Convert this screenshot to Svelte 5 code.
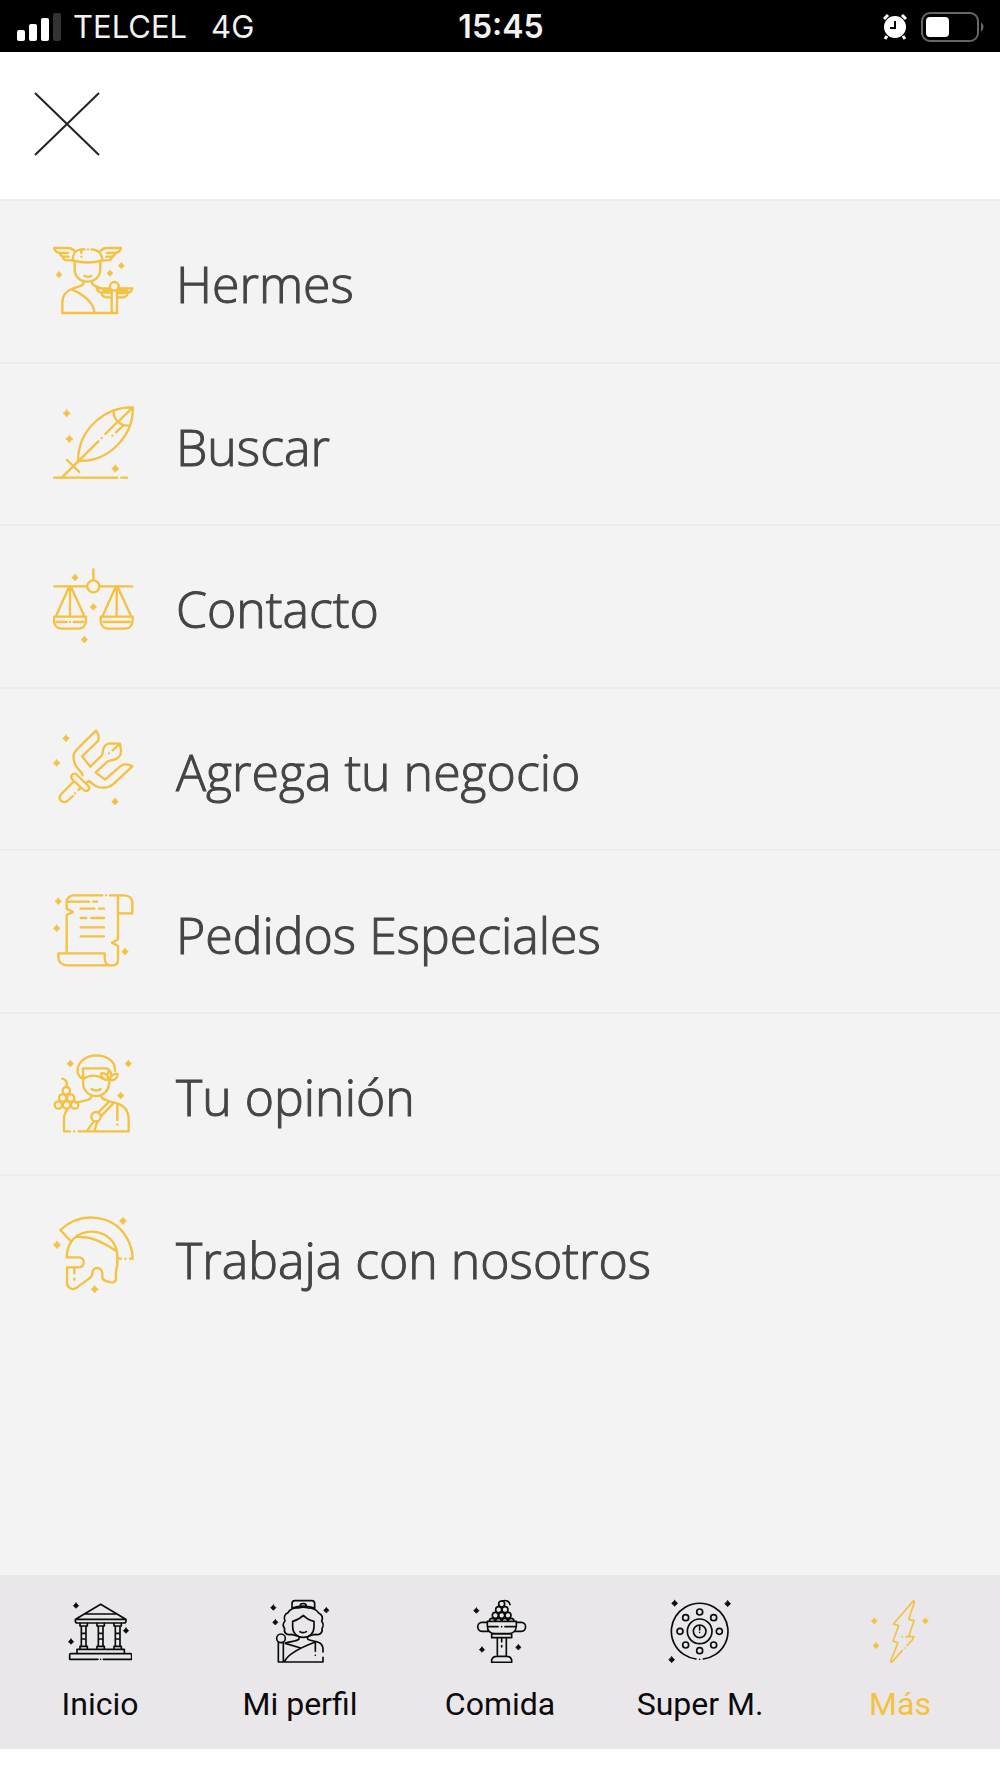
<script lang="ts">
	const menu = [
		{ label: 'Hermes', icon: hermes, box: '39 27 243 243' },
		{ label: 'Buscar', icon: quill, box: '39 20 243 243' },
		{ label: 'Contacto', icon: scales, box: '39 12 243 243' },
		{ label: 'Agrega tu negocio', icon: trident, box: '39 20 243 243' },
		{ label: 'Pedidos Especiales', icon: scroll, box: '39 28 243 243' },
		{ label: 'Tu opinión', icon: dionysus, box: '39 21 243 243' },
		{ label: 'Trabaja con nosotros', icon: helmet, box: '39 28 243 243' }
	];

	const tabs = [
		{ label: 'Inicio', icon: temple, box: '54 27 192 192' },
		{ label: 'Mi perfil', icon: goddess, box: '654 27 192 192' },
		{ label: 'Comida', icon: fruit, box: '84 27 192 192' },
		{ label: 'Super M.', icon: shield, box: '684 27 192 192' },
		{ label: 'Más', icon: bolt, box: '264 117 192 192' }
	];

	let active = $state('Más');
</script>

{#snippet star(x: number, y: number, r = 9)}
	<path
		class="star"
		d="M{x} {y - r} Q{x + 4} {y - 4} {x + r} {y} Q{x + 4} {y + 4} {x} {y + r} Q{x - 4} {y + 4} {x - r} {y} Q{x - 4} {y - 4} {x} {y - r}Z"
	/>
{/snippet}

{#snippet hermes()}
	<path d="M104 60C98 53 92 51 84 51H42C44 60 51 66 62 66H84M60 66C60 73 66 77 74 77H86M68 77C70 85 76 88 84 88H98" />
	<path d="M181 60C187 53 193 51 201 51H243C241 60 234 66 223 66H201M225 66C225 73 219 77 211 77H199M217 77C215 85 209 88 201 88H187" />
	<path d="M98 88C98 69 108 55 126 55H134M154 55C174 55 187 69 187 88M98 88C125 96 160 96 187 88M124 56V66M124 77V77M144 55V55" />
	<path d="M104 93V113C104 137 120 152 142 152S181 137 181 113V93M133 134Q143 141 154 134" />
	<path d="M131 151V157C128 167 108 167 95 174C75 182 67 195 67 215V246H232M156 151V157C160 166 172 168 184 172M95 175C130 190 160 215 164 246" />
	<circle cx="223" cy="166" r="13" />
	<path d="M215 178V246M231 178V246M170 172H209M170 172C172 180 178 185 186 185H213M184 186C186 194 191 199 200 199H214M190 178H212M236 172H277C274 182 268 186 260 186H234M263 187C260 196 255 199 248 199H233M234 179H262" />
	{@render star(57, 131)}{@render star(210, 127)}{@render star(244, 104)}
{/snippet}

{#snippet quill()}
	<path d="M278 36C200 34 116 96 114 196C205 202 282 120 278 36ZM278 36L234 80M221 50C221 72 240 92 266 91M232 80L196 116M248 92L228 111M217 121V121M185 128V128M175 138L66 246M81 194L118 230M42 247H232M244 247H261" />
	{@render star(80, 54, 11)}{@render star(88, 131, 11)}{@render star(226, 220, 11)}
{/snippet}

{#snippet scales()}
	<path d="M160 25V57M43 76H140M180 76H277M90 78V166M86 80L48 165M94 80L133 165M230 78V166M226 80L188 165M234 80L273 165M50 183H80M90 183V183M101 183H130M191 183H270" />
	<circle cx="160" cy="76" r="18" />
	<path d="M42 167H138V178C138 194 128 203 115 203H65C52 203 42 194 42 178ZM182 167H278V178C278 194 268 203 255 203H205C192 203 182 194 182 178Z" />
	{@render star(105, 50, 10)}{@render star(160, 138, 10)}{@render star(133, 236, 10)}
{/snippet}

{#snippet trident()}
	<path d="M168 31L110 88C97 101 99 120 108 138L125 157L128 165M168 31C176 42 178 54 174 62L126 108L151 139L185 106C190 99 187 91 191 83C195 73 204 69 214 69L240 70L243 92C244 106 233 116 222 118C212 121 207 120 202 124L167 156L195 178L243 136C253 130 268 133 277 138L219 192C203 205 180 204 165 196L147 182L141 186M238 72L218 90M207 99V99" />
	<path d="M96 164C101 157 107 160 111 164L145 197C153 207 140 217 131 209L97 177C93 173 93 168 96 164ZM101 184L64 221C50 238 70 252 82 242L99 227M105 219V219M115 209L121 203" />
	{@render star(78, 54, 10)}{@render star(50, 128, 10)}{@render star(225, 244, 10)}
{/snippet}

{#snippet scroll()}
	<path d="M80 217V103L99 94L80 84V64C80 51 91 44 102 44H187M198 44V44M210 44H253C268 44 277 54 277 67V98H235M234 45V176L216 186L234 196V239C234 249 227 254 218 254H82C65 254 55 243 55 228V218H194V232C194 244 200 253 210 254M86 63H147M160 63H171M122 84H163M177 84H192M122 112H139M154 112H192M122 140H192M122 167H192" />
	{@render star(55, 62, 10)}{@render star(50, 143, 10)}{@render star(255, 213, 10)}
{/snippet}

{#snippet dionysus()}
	<path d="M128 98C117 93 111 82 113 67C118 43 142 29 168 28C201 28 225 47 225 69V75M129 99V67H197C204 67 208 72 208 78M129 99C151 84 175 88 191 98M129 99V108C129 134 146 150 168 150C191 150 207 134 208 107M155 129Q168 138 182 129" />
	<path d="M208 74C216 82 216 90 208 101C200 91 200 82 208 74ZM183 82C193 80 203 86 206 101C192 103 183 96 183 82ZM233 84C222 82 213 88 209 101C221 106 232 99 233 84Z" />
	<path d="M154 149C154 162 140 163 108 170M183 149C185 160 200 164 222 170C250 175 266 192 266 222V256H116M102 256V256M90 256H72V220C72 207 76 197 83 190M207 167L174 200M222 170L183 211M163 226C152 235 147 246 141 256M174 226C166 236 166 246 164 256M232 178V222M232 236V236" />
	<circle cx="168" cy="212" r="14" />
	<circle cx="79" cy="134" r="11" /><circle cx="68" cy="156" r="11" /><circle cx="92" cy="156" r="11" />
	<circle cx="55" cy="177" r="11" /><circle cx="80" cy="177" r="11" /><circle cx="104" cy="177" r="11" />
	<path d="M79 122C84 110 78 100 67 98" />
	{@render star(91, 53, 10)}{@render star(265, 53, 10)}{@render star(242, 149, 10)}
{/snippet}

{#snippet helmet()}
	<path d="M94 108L61 73C123 14 217 29 256 89C270 111 278 135 278 159H270M256 159V159M243 159H233M94 108C115 77 160 70 193 87C219 101 232 123 232 156V180C226 190 228 206 228 222C225 232 217 232 208 229C197 226 187 225 187 215V204C187 182 157 181 157 203C158 213 149 217 143 222L111 245C97 257 81 246 81 230V185H117C136 184 136 155 117 155H80C81 134 84 121 94 108ZM109 94C155 92 188 108 231 138M103 186V203M103 219V222" />
	{@render star(249, 46, 11)}{@render star(51, 118, 11)}{@render star(164, 251, 11)}
{/snippet}

{#snippet temple()}
	<path d="M78 87L152 43L226 87M106 72H198M76 88H228V92Q228 99 221 99H83Q76 99 76 92ZM81 190V178H223V190M59 208V194Q59 191 63 191H241Q245 191 245 195V208H160M152 208V208M144 208H59" />
	{#each [101, 152, 203] as x}
		<path d="M{x - 11} 100V108H{x + 11}V100M{x - 7} 108V168M{x + 7} 108V168M{x - 7} 130H{x + 7}M{x - 7} 147H{x + 7}M{x - 11} 177V169H{x + 11}V177" />
	{/each}
	{@render star(78, 47, 8)}{@render star(228, 122, 8)}{@render star(63, 155, 8)}
{/snippet}

{#snippet goddess()}
	<path d="M726 57V41Q726 32 735 32H785Q794 32 794 41V57M726 54C745 47 773 47 794 54M750 48C750 38 769 38 769 48M744 138C736 138 728 133 724 133C711 136 700 129 704 116C697 106 700 98 705 93C699 79 707 71 713 69C720 57 735 53 745 54Q760 49 775 54C788 54 800 60 806 69C816 74 820 82 815 93C822 104 820 109 816 116C819 129 808 136 796 133C790 133 784 138 776 138" />
	<path d="M728 94C740 91 752 84 760 76C768 84 779 91 792 94V111C792 130 778 142 760 142S728 130 728 111ZM750 125Q760 131 769 125M747 141V147C743 154 720 154 706 159M773 141V147C777 156 819 147 819 178V186M819 202V216H685V158M700 158V214M704 214C713 193 751 173 796 156M706 160L752 174M796 156V184M796 196V196" />
	<circle cx="693" cy="145" r="13" />
	{@render star(670, 53, 8)}{@render star(676, 97, 8)}{@render star(829, 61, 8)}
{/snippet}

{#snippet fruit()}
	<circle cx="185" cy="42" r="9" /><circle cx="176" cy="59" r="9" /><circle cx="195" cy="59" r="9" />
	<circle cx="166" cy="76" r="9" /><circle cx="185" cy="76" r="9" /><circle cx="204" cy="76" r="9" />
	<path d="M185 33C199 29 208 34 210 44M148 94C148 82 164 82 166 94C168 82 183 82 185 94C187 82 202 82 204 94C206 82 222 82 222 94M142 94H229V107C229 122 219 131 204 131H166C151 131 142 122 142 107ZM142 97H126C109 97 109 124 126 124H148M229 97H244C261 97 261 124 244 124H223M147 110H174M185 110V110M195 110H224M155 132H215V143H155ZM172 144V199M199 144V199M185 144V155M185 167V171M155 217V210Q158 199 170 199H200Q212 199 215 210V217Z" />
	{@render star(109, 62, 8)}{@render star(126, 179, 8)}{@render star(235, 172, 8)}
{/snippet}

{#snippet shield()}
	<path d="M768 207A85 84 0 1 1 790 207M779 208V208M779 109V120M779 127V127" />
	<circle cx="779" cy="124" r="37" /><circle cx="779" cy="124" r="19" />
	{#each [[779, 66], [821, 83], [838, 124], [821, 165], [779, 182], [737, 165], [720, 124], [737, 83]] as [cx, cy]}
		<circle {cx} {cy} r="9" />
	{/each}
	{@render star(704, 40, 9)}{@render star(863, 41, 9)}{@render star(695, 209, 9)}
{/snippet}

{#snippet bolt()}
	<path d="M367 271L337 305Q332 309 332 303L354 248L339 243L356 197L340 192L399 124Q404 120 403 127L386 178L402 182L386 230M378 230H402Q401 235 396 241L381 256M374 264V264M367 230V230" />
	{@render star(283, 183)}{@render star(436, 183)}{@render star(288, 257)}
{/snippet}

<div class="screen">
	<div class="status">
		<div class="carrier">
			<svg class="signal" viewBox="0 0 45 28" aria-hidden="true">
				<rect x="0" y="17" width="8" height="11" rx="2" />
				<rect x="12" y="11" width="8" height="17" rx="2" />
				<rect x="24" y="5" width="8" height="23" rx="2" />
				<rect class="weak" x="36" y="0" width="8" height="28" rx="2" />
			</svg>
			<span>TELCEL</span>
			<span class="network">4G</span>
		</div>
		<time>15:45</time>
		<div class="power">
			<svg class="alarm" viewBox="0 0 24 26" aria-hidden="true">
				<circle cx="12" cy="13" r="11" />
				<path class="bells" d="M1 5L5 1M23 5L19 1M4 22L2 25M20 22L22 25" />
				<path class="hands" d="M12 7V14H7" />
			</svg>
			<svg class="battery" viewBox="0 0 64 30" aria-hidden="true">
				<rect class="shell" x="1" y="1" width="56" height="28" rx="8" />
				<rect x="5" y="5" width="23" height="20" rx="4" />
				<path class="nub" d="M60 10Q65 15 60 20Z" />
			</svg>
		</div>
	</div>

	<header>
		<button class="close" aria-label="Cerrar">
			<svg viewBox="0 0 66 64" aria-hidden="true"><path d="M1 1L65 63M65 1L1 63" /></svg>
		</button>
	</header>

	<main>
		<ul>
			{#each menu as item}
				<li>
					<a href="#menu">
						<svg class="icon" viewBox={item.box} aria-hidden="true">{@render item.icon()}</svg>
						<span>{item.label}</span>
					</a>
				</li>
			{/each}
		</ul>
	</main>

	<nav>
		{#each tabs as tab}
			<button class="tab" class:active={active === tab.label} onclick={() => (active = tab.label)}>
				<svg class="icon" viewBox={tab.box} aria-hidden="true">{@render tab.icon()}</svg>
				<span>{tab.label}</span>
			</button>
		{/each}
	</nav>
</div>

<style>
	:global(body) {
		margin: 0;
		background: #fff;
	}

	.screen {
		display: flex;
		flex-direction: column;
		box-sizing: border-box;
		min-height: 100vh;
		padding-bottom: 29px;
	}

	button {
		padding: 0;
		border: 0;
		background: none;
		font: inherit;
		color: inherit;
		cursor: pointer;
	}

	.status {
		display: grid;
		grid-template-columns: 1fr auto 1fr;
		align-items: center;
		box-sizing: border-box;
		height: 52px;
		padding: 2px 15px 0 17px;
		background: #000;
		color: #f2f2f2;
		font: 31px/50px Inter, sans-serif;
	}

	.status svg {
		fill: #fff;
	}

	.carrier,
	.power {
		display: flex;
		align-items: center;
	}

	.power {
		justify-content: flex-end;
		gap: 14px;
	}

	.signal {
		width: 45px;
		height: 28px;
		margin-right: 11px;
	}

	.signal .weak {
		fill: #333;
	}

	.network {
		margin-left: 24px;
	}

	time {
		font-size: 32px;
		font-weight: 600;
	}

	.alarm {
		width: 24px;
		height: 26px;
	}

	.bells {
		stroke: #fff;
		stroke-width: 3;
	}

	.hands {
		fill: none;
		stroke: #000;
		stroke-width: 2;
	}

	.battery {
		width: 64px;
		height: 30px;
	}

	.battery .shell {
		fill: none;
		stroke: #666;
		stroke-width: 2;
	}

	.battery .nub {
		fill: #666;
	}

	header {
		display: flex;
		align-items: center;
		box-sizing: border-box;
		height: 147px;
		padding: 0 34px 4px;
		background: #fff;
	}

	.close svg {
		display: block;
		width: 66px;
		height: 64px;
		stroke: #222;
		stroke-width: 2;
	}

	main {
		display: flex;
		flex: 1;
		box-sizing: border-box;
		padding-bottom: 238px;
		background: #f3f3f3;
	}

	ul {
		display: grid;
		flex: 1;
		grid-auto-rows: 1fr;
		margin: 0;
		padding: 0;
		list-style: none;
	}

	li {
		display: flex;
		border-top: 2px solid #ececec;
	}

	li a {
		display: flex;
		flex: 1;
		align-items: center;
		gap: 42px;
		padding: 0 53px;
		color: #444;
		font: 300 50px/64px 'Open Sans', sans-serif;
		text-decoration: none;
		-webkit-text-stroke: 1px #444;
	}

	li span {
		padding-top: 6px;
	}

	li .icon {
		width: 81px;
		height: 81px;
		margin-bottom: 2px;
		color: #f4c141;
		stroke-width: 7;
	}

	.icon {
		flex: none;
		fill: none;
		stroke: currentColor;
		stroke-linecap: round;
		stroke-linejoin: round;
	}

	.icon :global(.star) {
		fill: currentColor;
		stroke-width: 2;
	}

	nav {
		display: grid;
		grid-template-columns: repeat(5, 1fr);
		height: 174px;
		background: #e9e7ea;
	}

	.tab {
		display: flex;
		flex-direction: column;
		align-items: center;
		gap: 23px;
		padding-top: 24px;
		color: #0b0b0b;
		font: 32px/36px Roboto, sans-serif;
	}

	.tab .icon {
		width: 64px;
		height: 64px;
		stroke-width: 5;
	}

	.tab.active {
		color: #f4c141;
	}
</style>
